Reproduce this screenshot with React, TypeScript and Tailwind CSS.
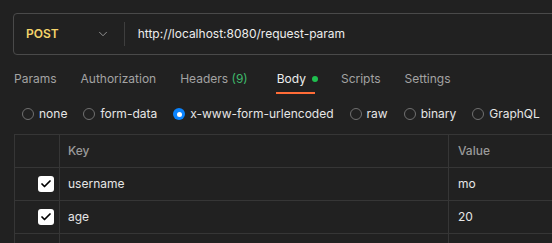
import { ChevronDown, Check } from "lucide-react";

const tabs = [
  { label: "Params", x: "ml-[14px]" },
  { label: "Authorization", x: "ml-[24px]" },
];

const Radio = ({ label, selected }: { label: string; selected?: boolean }) => (
  <div className="flex shrink-0 items-center gap-[5px] whitespace-nowrap">
    {selected ? (
      <span className="flex h-[12px] w-[12px] items-center justify-center rounded-full bg-[#0a84ff]">
        <span className="h-[5px] w-[5px] rounded-full bg-white" />
      </span>
    ) : (
      <span className="h-[12px] w-[12px] rounded-full border border-[#707070]" />
    )}
    <span className="text-[#e6e6e6]">{label}</span>
  </div>
);

const Box = () => (
  <span className="flex h-[16px] w-[16px] items-center justify-center rounded-[3px] bg-white">
    <Check className="h-[12px] w-[12px] text-black" strokeWidth={3.5} />
  </span>
);

const App = () => {
  return (
    <div
      className="h-[243px] w-[552px] overflow-hidden bg-[#212121] text-[12px] text-[#e6e6e6]"
      style={{ fontFamily: "Inter, 'Noto Sans', sans-serif" }}
    >
      <div className="pt-[13px] pl-[13px]">
        <div className="flex h-[42px] w-[600px] items-center rounded-[4px] border border-[#4a4a4a]">
          <span className="ml-[12px] font-semibold text-[#f5d46a]">POST</span>
          <ChevronDown className="ml-[37px] h-[14px] w-[14px] text-[#a0a0a0]" strokeWidth={1.5} />
          <span className="ml-[14px] h-[24px] w-px bg-[#3e3e3e]" />
          <span className="ml-[13px] text-[#ededed]">http://localhost:8080/request-param</span>
        </div>
      </div>

      <div className="mt-[15px] flex h-[24px] items-start whitespace-nowrap text-[#a3a3a3]">
        {tabs.map((t) => (
          <span key={t.label} className={t.x}>
            {t.label}
          </span>
        ))}
        <span className="ml-[24px]">
          Headers <span className="text-[#3fb86b]">(9)</span>
        </span>
        <div className="ml-[28px] flex h-[24px] flex-col">
          <div className="flex items-center gap-[6px] pl-[1px] text-[#ededed]">
            Body
            <span className="h-[6px] w-[6px] rounded-full bg-[#1fbf4f]" />
          </div>
          <span className="mt-auto h-[2px] w-[39px] bg-[#ff6c37]" />
        </div>
        <span className="ml-[23px]">Scripts</span>
        <span className="ml-[24px]">Settings</span>
      </div>

      <div className="mt-[7px] flex h-[26px] items-center gap-[16px] pl-[22px]">
        <Radio label="none" />
        <Radio label="form-data" />
        <Radio label="x-www-form-urlencoded" selected />
        <Radio label="raw" />
        <Radio label="binary" />
        <Radio label="GraphQL" />
      </div>

      <div className="ml-[14px] mt-[7px] w-[600px] border-t border-l border-[#363636]">
        <div className="flex h-[33px] border-b border-[#363636] font-medium text-[#9a9a9a]">
          <div className="w-[45px] border-r border-[#363636]" />
          <div className="flex w-[389px] items-center border-r border-[#363636] pl-[8px]">Key</div>
          <div className="flex items-center pl-[9px]">Value</div>
        </div>
        {[
          ["username", "mo"],
          ["age", "20"],
        ].map(([k, v]) => (
          <div key={k} className="flex h-[33px] border-b border-[#363636]">
            <div className="flex w-[45px] items-center justify-end border-r border-[#363636] pr-[5px]">
              <Box />
            </div>
            <div className="flex w-[389px] items-center border-r border-[#363636] pl-[8px]">{k}</div>
            <div className="flex items-center pl-[9px]">{v}</div>
          </div>
        ))}
        <div className="flex h-[33px]">
          <div className="w-[45px] border-r border-[#363636]" />
          <div className="w-[389px] border-r border-[#363636]" />
        </div>
      </div>
    </div>
  );
};

export default App;
